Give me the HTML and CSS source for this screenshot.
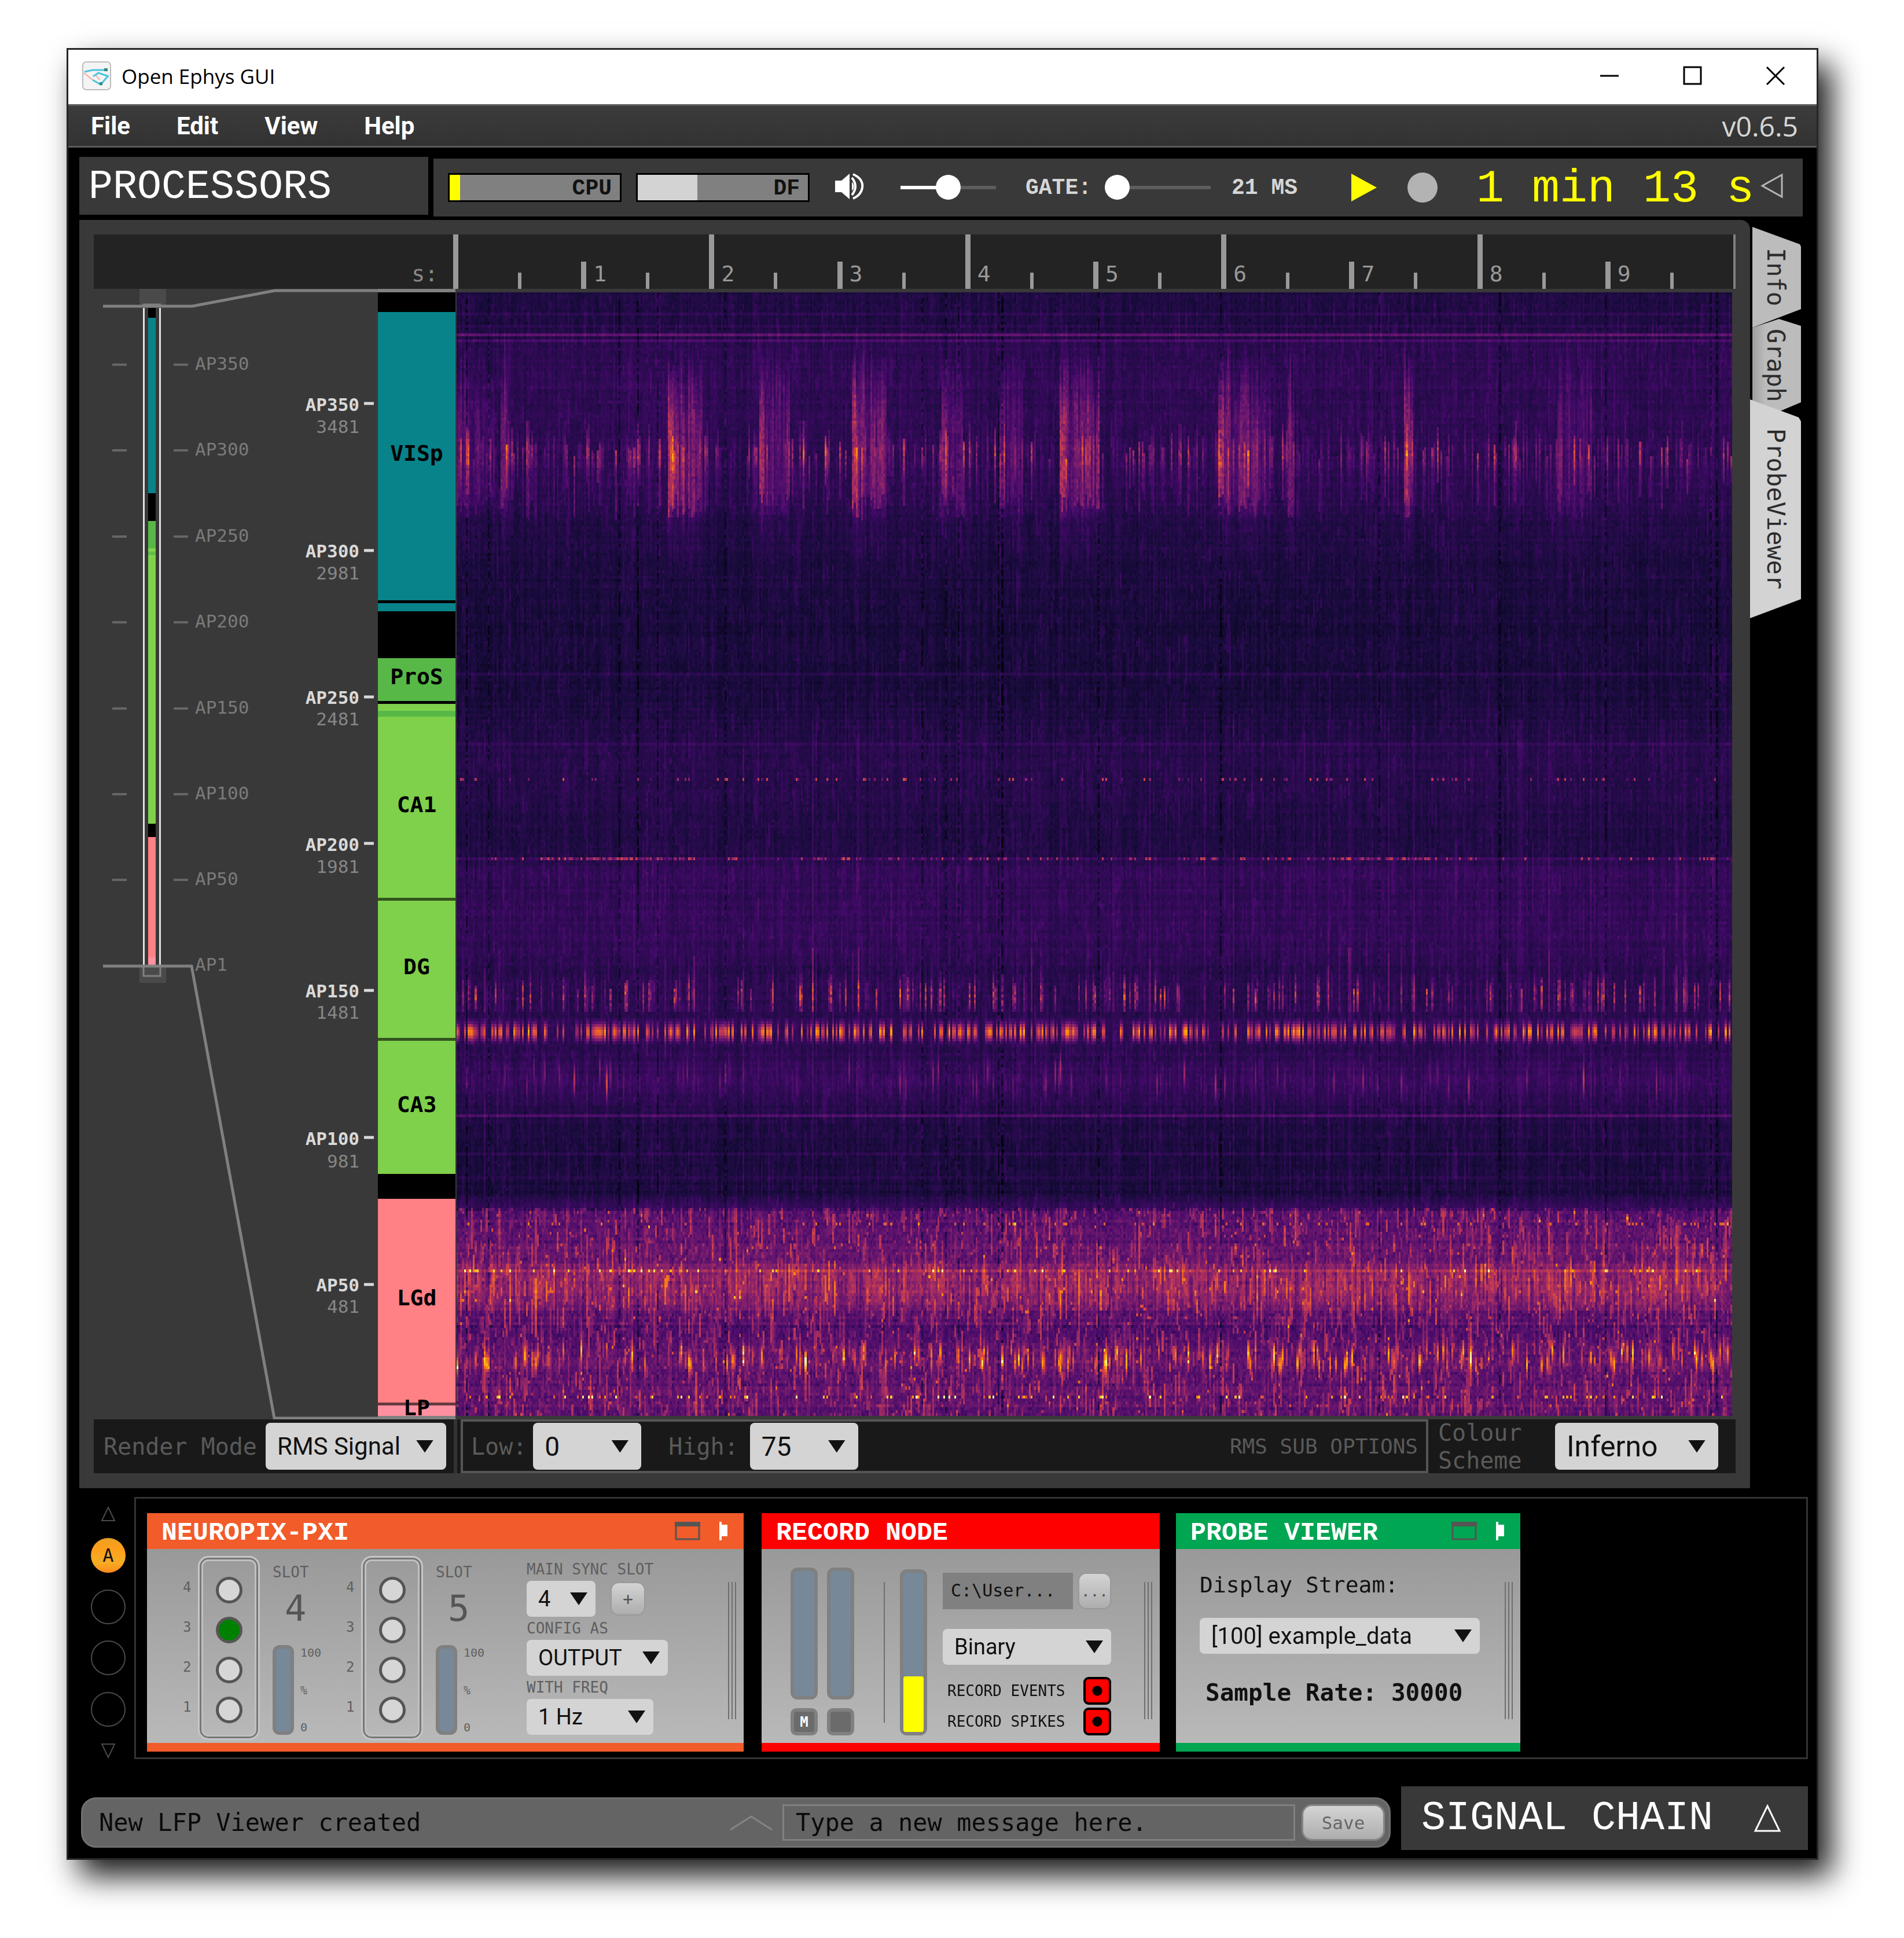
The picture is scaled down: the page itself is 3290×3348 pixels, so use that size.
FILE: index.html
```html
<!DOCTYPE html>
<html lang="en">
<head>
<meta charset="utf-8">
<title>Open Ephys GUI</title>
<link rel="stylesheet" href="styles.css">
</head>
<body>
<div class="window">
  <header class="titlebar">
    <svg class="app-icon" viewBox="0 0 50 50" width="50" height="50" aria-hidden="true">
      <rect x="1" y="1" width="48" height="48" rx="6" fill="#f4f4f4" stroke="#bdbdbd" stroke-width="2"/>
      <path d="M4 18L18 15H40M19 26L28 20L46 26M18 32L32 40L44 26" fill="none" stroke="#4cc4dc" stroke-width="3"/>
      <path d="M3 20L18 32M24 24L30 32" stroke="#f2a89c" stroke-width="2"/>
      <path d="M38 12h6v5h-6zM30 36h5v5h-5z" fill="#2a8c7c"/>
    </svg>
    <h1 class="app-title">Open Ephys GUI</h1>
    <div class="window-buttons">
      <button class="win-btn" aria-label="Minimize"><svg width="34" height="34" viewBox="0 0 34 34"><path d="M1 17H33" stroke="#000" stroke-width="3"/></svg></button>
      <button class="win-btn" aria-label="Maximize"><svg width="34" height="34" viewBox="0 0 34 34"><rect x="2" y="2" width="29" height="29" fill="none" stroke="#000" stroke-width="3"/></svg></button>
      <button class="win-btn" aria-label="Close"><svg width="34" height="34" viewBox="0 0 34 34"><path d="M2 2L32 32M32 2L2 32" stroke="#000" stroke-width="3"/></svg></button>
    </div>
  </header>

  <nav class="menubar">
    <button class="menu">File</button>
    <button class="menu">Edit</button>
    <button class="menu">View</button>
    <button class="menu">Help</button>
    <span class="version">v0.6.5</span>
  </nav>

  <div class="top-row">
    <button class="processors">PROCESSORS</button>
    <div class="control-panel">
      <div class="meter"><div class="meter-fill cpu" style="width:6%"></div><span class="meter-label">CPU</span></div>
      <div class="meter"><div class="meter-fill disk" style="width:35%"></div><span class="meter-label">DF</span></div>
      <svg class="speaker" width="50" height="46" viewBox="0 0 50 46" aria-hidden="true">
        <path d="M0 13H11L25 1V45L11 33H0Z" fill="#fff"/>
        <path d="M29 15Q36 23 29 31Z" fill="#fff"/>
        <path d="M29 8Q41 23 29 38M31 2Q49 10 47 25Q45 38 31 44" fill="none" stroke="#fff" stroke-width="4"/>
      </svg>
      <input class="slider volume" type="range" min="0" max="100" value="50" aria-label="Volume">
      <label class="tiny" for="gate">GATE:</label>
      <input class="slider gate" id="gate" type="range" min="0" max="100" value="0">
      <span class="tiny latency">21 MS</span>
      <button class="play" aria-label="Play"><svg width="46" height="50" viewBox="0 0 46 50"><path d="M1 1L45 25L1 49Z" fill="#ff0"/></svg></button>
      <button class="record" aria-label="Record"></button>
      <span class="clock">1 min 13 s</span>
      <button class="expand" aria-label="Show recording options"><svg width="40" height="44" viewBox="0 0 40 44"><path d="M3 22L37 3V41Z" fill="none" stroke="#b4b4b4" stroke-width="3"/></svg></button>
    </div>
  </div>

  <div class="main-row">
    <main class="viewer">
      <div class="ruler">
        <span class="unit">s:</span>
        <span class="sec major"></span><span class="sec">1</span><span class="sec major">2</span><span class="sec">3</span><span class="sec major">4</span><span class="sec">5</span><span class="sec major">6</span><span class="sec">7</span><span class="sec major">8</span><span class="sec">9</span>
      </div>
      <div class="plot">
        <svg class="probe" width="491" height="1953" viewBox="0 0 491 1953">
          <g fill="#4a4a4a"><rect x="79" y="0" width="46" height="30"/><rect x="79" y="1170" width="46" height="29"/></g>
          <g fill="#e0e0e0"><rect x="85" y="33" width="3" height="1135"/><rect x="113" y="33" width="3" height="1135"/></g>
          <rect x="94" y="33" width="13" height="1135" fill="#000"/>
          <rect x="94" y="50" width="13" height="303" fill="#08838a"/>
          <rect x="94" y="401" width="13" height="47" fill="#58b847"/>
          <rect x="94" y="448" width="13" height="476" fill="#7fd04b"/>
          <rect x="94" y="454" width="13" height="6" fill="#62bd49"/>
          <rect x="94" y="947" width="13" height="208" fill="#ff8085"/>
          <rect x="94" y="1155" width="13" height="13" fill="#ff90a0"/>
          <g fill="none" stroke="#808080">
            <path d="M86 1170V1187H115V1170M86 30V27H115V30" stroke-width="3"/>
            <path d="M16 30H170L313 3H491M16 1170H169L312 1951H491" stroke-width="5"/>
          </g>
          <path class="ticks" d="M32 131h25M138 131h25M32 279h25M138 279h25M32 428h25M138 428h25M32 576h25M138 576h25M32 725h25M138 725h25M32 873h25M138 873h25M32 1021h25M138 1021h25"/>
          <g class="depth-small">
            <text x="175" y="140">AP350</text><text x="175" y="288">AP300</text><text x="175" y="437">AP250</text><text x="175" y="585">AP200</text><text x="175" y="734">AP150</text><text x="175" y="882">AP100</text><text x="175" y="1030">AP50</text><text x="175" y="1178">AP1</text>
          </g>
          <path class="ticks-main" d="M467 198h17M467 452h17M467 705h17M467 958h17M467 1212h17M467 1466h17M467 1720h17"/>
          <g class="depth-main">
            <text x="459" y="211">AP350</text><text x="459" y="464">AP300</text><text x="459" y="717">AP250</text><text x="459" y="971">AP200</text><text x="459" y="1224">AP150</text><text x="459" y="1479">AP100</text><text x="459" y="1732">AP50</text>
          </g>
          <g class="depth-um">
            <text x="459" y="249">3481</text><text x="459" y="502">2981</text><text x="459" y="754">2481</text><text x="459" y="1009">1981</text><text x="459" y="1261">1481</text><text x="459" y="1518">981</text><text x="459" y="1769">481</text>
          </g>
        </svg>
        <div class="regions">
          <div></div><div class="teal">VISp</div><div class="teal cut"></div><div></div>
          <div class="green">ProS</div><div class="lime cut"></div><div class="green"></div><div class="lime">CA1</div>
          <div class="lime soft-cut">DG</div><div class="lime soft-cut">CA3</div><div></div>
          <div class="pink">LGd</div><div class="rose soft-cut">LP</div>
        </div>
        <canvas class="heatmap" id="heatmap" width="700" height="384"></canvas>
      </div>
      <div class="options">
        <div class="opt-group mode">
          <label for="mode">Render Mode</label>
          <span class="combo w-mode"><select id="mode"><option>RMS Signal</option></select></span>
        </div>
        <div class="opt-group sub">
          <label for="low">Low:</label>
          <span class="combo w-num"><select id="low"><option>0</option></select></span>
          <label class="high" for="high">High:</label>
          <span class="combo w-num"><select id="high"><option>75</option></select></span>
          <span class="sub-title">RMS SUB OPTIONS</span>
        </div>
        <div class="opt-group scheme">
          <label for="scheme">Colour<br>Scheme</label>
          <span class="combo w-scheme"><select id="scheme"><option>Inferno</option></select></span>
        </div>
      </div>
    </main>
    <div class="tabs">
      <button class="tab info">Info</button>
      <button class="tab graph">Graph</button>
      <button class="tab probeviewer">ProbeViewer</button>
    </div>
  </div>

  <section class="chain-row">
    <div class="chain-picker">
      <button class="arrow" aria-label="Previous"><svg width="26" height="28" viewBox="0 0 26 28"><path d="M13 3L24 26H2Z" fill="none" stroke="#4a4a4a" stroke-width="2"/></svg></button>
      <button class="chain active">A</button>
      <button class="chain" aria-label="Chain B"></button>
      <button class="chain" aria-label="Chain C"></button>
      <button class="chain" aria-label="Chain D"></button>
      <button class="arrow" aria-label="Next"><svg width="26" height="28" viewBox="0 0 26 28"><path d="M13 25L2 2H24Z" fill="none" stroke="#4a4a4a" stroke-width="2"/></svg></button>
    </div>
    <div class="chain-view">
      <article class="module neuropix">
        <header><h2>NEUROPIX-PXI</h2>
          <svg class="mod-win" width="44" height="32" viewBox="0 0 44 32"><path d="M2 2H42V30H2Z" fill="none" stroke="#555" stroke-width="3"/><path d="M0 0H44V8H0Z" fill="#555"/></svg>
          <svg class="mod-fold" width="14" height="32" viewBox="0 0 14 32"><path d="M0 0H4V5H14V25H4V32H0Z" fill="#fff"/></svg>
        </header>
        <div class="mod-body">
          <div class="slot">
            <div class="ports-num"><span>4</span><span>3</span><span>2</span><span>1</span></div>
            <div class="ports">
              <input type="radio" name="port" aria-label="Slot 4 port 4"><input type="radio" name="port" aria-label="Slot 4 port 3" checked><input type="radio" name="port" aria-label="Slot 4 port 2"><input type="radio" name="port" aria-label="Slot 4 port 1">
            </div>
            <div class="slot-info">
              <span class="caption">SLOT</span><span class="slot-no">4</span>
              <div class="fifo"><div class="gauge"></div><div class="scale"><span>100</span><span>%</span><span>0</span></div></div>
            </div>
          </div>
          <div class="slot">
            <div class="ports-num"><span>4</span><span>3</span><span>2</span><span>1</span></div>
            <div class="ports">
              <input type="radio" name="port" aria-label="Slot 5 port 4"><input type="radio" name="port" aria-label="Slot 5 port 3"><input type="radio" name="port" aria-label="Slot 5 port 2"><input type="radio" name="port" aria-label="Slot 5 port 1">
            </div>
            <div class="slot-info">
              <span class="caption">SLOT</span><span class="slot-no">5</span>
              <div class="fifo"><div class="gauge"></div><div class="scale"><span>100</span><span>%</span><span>0</span></div></div>
            </div>
          </div>
          <div class="sync">
            <label class="caption" for="sync">MAIN SYNC SLOT</label>
            <div class="sync-row"><span class="combo small w-sync"><select id="sync"><option>4</option></select></span><button class="soft-btn plus">+</button></div>
            <label class="caption" for="config">CONFIG AS</label>
            <span class="combo small w-config"><select id="config"><option>OUTPUT</option></select></span>
            <label class="caption" for="freq">WITH FREQ</label>
            <span class="combo small w-freq"><select id="freq"><option>1 Hz</option></select></span>
          </div>
          <div class="grip"></div>
        </div>
      </article>

      <article class="module recorder">
        <header><h2>RECORD NODE</h2></header>
        <div class="mod-body">
          <div class="strip"><div class="gauge"></div><button class="sync-btn">M</button></div>
          <div class="strip"><div class="gauge"></div><button class="sync-btn" aria-label="Stream sync"></button></div>
          <div class="divider"></div>
          <div class="gauge disk-gauge"><div class="gauge-fill" style="height:35%"></div></div>
          <div class="rec-form">
            <div class="path-row"><span class="path">C:\User...</span><button class="soft-btn dots">...</button></div>
            <span class="combo small w-format"><select aria-label="File format"><option>Binary</option></select></span>
            <div class="rec-toggle"><label class="caption dark" for="rec-ev">RECORD EVENTS</label><input type="checkbox" id="rec-ev" checked></div>
            <div class="rec-toggle"><label class="caption dark" for="rec-sp">RECORD SPIKES</label><input type="checkbox" id="rec-sp" checked></div>
          </div>
          <div class="grip"></div>
        </div>
      </article>

      <article class="module probe-viewer">
        <header><h2>PROBE VIEWER</h2>
          <svg class="mod-win" width="44" height="32" viewBox="0 0 44 32"><path d="M2 2H42V30H2Z" fill="none" stroke="#555" stroke-width="3"/><path d="M0 0H44V8H0Z" fill="#555"/></svg>
          <svg class="mod-fold" width="14" height="32" viewBox="0 0 14 32"><path d="M0 0H4V5H14V25H4V32H0Z" fill="#fff"/></svg>
        </header>
        <div class="mod-body">
          <div class="stream-form">
            <label for="stream">Display Stream:</label>
            <span class="combo small w-stream"><select id="stream"><option>[100] example_data</option></select></span>
            <strong>Sample Rate: 30000</strong>
          </div>
          <div class="grip"></div>
        </div>
      </article>
    </div>
  </section>

  <footer class="bottom-row">
    <div class="message-bar">
      <span class="status">New LFP Viewer created</span>
      <svg class="chevron" width="76" height="28" viewBox="0 0 76 28"><path d="M2 26L38 3L74 26" fill="none" stroke="#858585" stroke-width="3"/></svg>
      <input class="message" type="text" value="Type a new message here." aria-label="Message">
      <button class="soft-btn save">Save</button>
    </div>
    <button class="signal-chain">SIGNAL CHAIN
      <svg width="46" height="48" viewBox="0 0 46 48"><path d="M23 3L44 46H2Z" fill="none" stroke="#fff" stroke-width="3"/></svg>
    </button>
  </footer>
</div>
<script src="heatmap.js"></script>
</body>
</html>
```
FILE: styles.css
```css
* { box-sizing: border-box; }
:root {
  --mono: "DejaVu Sans Mono", monospace;
  --tech: "Liberation Mono", monospace;
  --sans: Roboto, sans-serif;
  --panel: #393939;
}
body { margin: 0; padding: 83px 148px 135px 115px; background: #fff; font-family: var(--mono); }
button, input, select { margin: 0; padding: 0; border: 0; border-radius: 0; background: none; font: inherit; color: inherit; }
button { display: flex; align-items: center; justify-content: center; }
svg { display: block; flex: none; }
h1, h2 { margin: 0; }

.window { display: flex; flex-direction: column; background: #000; border: 3px solid #262626; box-shadow: 22px 28px 50px rgba(0,0,0,.9); }

.titlebar { display: flex; align-items: center; height: 94px; padding: 0 28px 4px 24px; background: #fff; }
.app-title { margin-left: 18px; font: 400 35px "Open Sans", sans-serif; color: #000; }
.window-buttons { display: flex; gap: 4px; margin-left: auto; }
.win-btn { width: 140px; height: 90px; }
.win-btn:last-child { width: 86px; margin-left: 26px; }

.menubar { display: flex; align-items: center; height: 75px; padding: 0 32px 0 39px; gap: 80px; background: linear-gradient(#3c3c3c, #323232); border-top: 3px solid #5a5a5a; border-bottom: 3px solid #5a5a5a; }
.menu { font: 700 42px var(--sans); color: #fff; }
.version { margin-left: auto; font: 48px "Open Sans", sans-serif; color: #d6d6d6; }

.top-row { display: flex; align-items: flex-start; gap: 9px; padding: 16px 24px 6px 19px; }
.processors { flex: none; width: 603px; height: 100px; padding: 4px 0 0 16px; justify-content: flex-start; background: var(--panel); color: #fff; font: 70px var(--tech); }
.control-panel { display: flex; flex: 1; align-items: center; height: 100px; margin-top: 3px; padding-left: 25px; background: var(--panel); }
.meter { display: flex; align-items: center; width: 300px; height: 50px; margin-right: 25px; border: 3px solid #000; background: #808080; }
.meter-fill { height: 100%; }
.cpu { background: #ff0; }
.disk { background: #d3d3d3; }
.meter-label { margin-left: auto; padding: 3px 14px 0 0; font: 700 38px/40px var(--tech); color: #111; }
.speaker { margin: 0 63px 4px 19px; }
.slider { appearance: none; height: 44px; }
.slider::-webkit-slider-runnable-track { height: 6px; background: #5d5d5d; }
.volume::-webkit-slider-runnable-track { background: linear-gradient(90deg, #fff 50%, #5d5d5d 50%); }
.slider::-webkit-slider-thumb { appearance: none; width: 43px; height: 43px; margin-top: -19px; border-radius: 50%; background: #fff; }
.volume { width: 165px; margin-right: 51px; }
.tiny { font: 700 38px var(--tech); color: #d6d6d6; }
.gate { width: 183px; margin-left: 23px; }
.latency { margin-left: 36px; }
.play { margin-left: 92px; }
.record { width: 52px; height: 52px; margin: 0 67px 0 52px; border-radius: 50%; background: #b3b3b3; }
.clock { padding-top: 4px; font: 80px var(--tech); color: #ff0; white-space: pre; }
.expand { margin: 0 33px 6px auto; }

.main-row { display: flex; align-items: flex-start; padding: 0 27px 15px 19px; }
.viewer { flex: 1; min-width: 0; padding: 25px 25px 26px; background: var(--panel); border-top-right-radius: 16px; }
.ruler { display: flex; height: 94px; background: #232323; border-right: 4px solid #808080; color: #999; }
.unit, .sec { padding-top: 45px; font: 38px/47px var(--mono); }
.unit { width: 621px; padding-right: 26px; text-align: right; color: #8a8a8a; }
.sec { flex: 1; padding-left: 21px; background: linear-gradient(#999, #999) 0 100% / 9px 47px no-repeat, linear-gradient(#999, #999) 52% 100% / 6px 28px no-repeat; }
.sec.major { background-size: 9px 94px, 6px 28px; }

.plot { display: flex; height: 1953px; }
.ticks { stroke: #666; stroke-width: 4; }
.ticks-main { stroke: #d9d9d9; stroke-width: 5; }
.depth-small { font: 31px var(--mono); fill: #7a7a7a; }
.depth-main { font: 700 31px var(--mono); fill: #d9d9d9; text-anchor: end; }
.depth-um { font: 31px var(--mono); fill: #868686; text-anchor: end; }
.regions { display: grid; grid-template-rows: 34fr 498fr 19fr 81fr 74fr 17fr 9fr 314fr 242fr 235fr 43fr 352fr 23fr; width: 134px; flex: none; border-top: 6px solid #808080; border-bottom: 6px solid #808080; background: #000; color: #000; font: 700 38px/24px var(--mono); }
.regions > div { display: flex; align-items: center; justify-content: center; min-height: 0; height: 100%; padding-bottom: 10px; }
.teal { background: #08838a; }
.green { background: #58b847; }
.lime { background: #7fd04b; }
.pink { background: #ff8085; }
.rose { background: #ff90a0; }
.cut { border-top: 5px solid #000; }
.soft-cut { border-top: 5px solid rgba(0,0,0,.6); }
.heatmap { flex: 1; min-width: 0; height: 1941px; margin: 6px 6px 6px 2px; image-rendering: pixelated; background: #160b39; }

.options { display: flex; height: 93px; background: #191919; color: #5a5a5a; font-size: 40px; }
.opt-group { display: flex; align-items: center; }
.mode { width: 628px; padding: 0 13px 0 17px; justify-content: space-between; border-right: 6px solid #333; }
.sub { flex: 1; margin-left: 6px; padding: 0 14px 0 14px; border: 4px solid #555; }
.sub .combo { margin-left: 11px; }
.high { margin-left: 47px; }
.sub .high + .combo { margin-left: 20px; }
.sub-title { margin-left: auto; font-size: 36px; }
.scheme { width: 531px; padding: 0 30px 0 17px; justify-content: space-between; line-height: 48px; }
.combo { display: grid; align-items: center; height: 81px; border-radius: 8px; background: #d4d4d4; color: #111; font: 42px var(--sans); }
.combo select { grid-area: 1 / 1; appearance: none; width: 100%; height: 100%; padding-left: 20px; outline: 0; color: #111; }
.combo::after { content: ""; grid-area: 1 / 1; justify-self: end; width: 30px; height: 22px; margin-right: 22px; background: #111; clip-path: polygon(0 0, 100% 0, 50% 100%); pointer-events: none; }
.small { height: 62px; font-size: 38px; }
.small::after { margin-right: 14px; }
.w-mode { width: 312px; }
.w-num { width: 187px; font-size: 46px; }
.w-scheme { width: 282px; font-size: 50px; }

.tabs { display: flex; flex-direction: column; width: 88px; padding-top: 12px; }
.tab { width: 88px; writing-mode: vertical-rl; font: 42px var(--mono); color: #2c2c2c; background: #bcbcbc; }
.info { height: 174px; clip-path: polygon(4px 0, 86px 30px, 88px 34px, 88px 142px, 4px 174px); }
.graph { height: 160px; margin-top: -15px; background: linear-gradient(90deg, #999, #bcbcbc 30%); clip-path: polygon(4px 15px, 50px 0, 88px 12px, 88px 144px, 50px 160px, 4px 143px); }
.probeviewer { height: 378px; margin-top: -21px; background: #d3d3d3; clip-path: polygon(0 0, 84px 31px, 88px 38px, 88px 345px, 0 378px); }

.chain-row { display: flex; padding: 0 15px 0 39px; }
.chain-picker { display: flex; flex-direction: column; align-items: center; justify-content: space-between; width: 60px; margin-right: 15px; padding: 15px 0 0; }
.chain { width: 60px; height: 60px; border: 2px solid #4a4a4a; border-radius: 50%; }
.active { border: 0; background: linear-gradient(#e8a020, #ff9f1c 30%, #f5ac24 70%, #ff8a1c); color: #111; font: 32px var(--mono); }
.chain-view { display: flex; flex: 1; gap: 28px; padding: 25px 19px 10px; border: 3px solid #333; }
.neuropix { --accent: #f25b2a; width: 1031px; margin-right: 3px; }
.recorder { --accent: #f00; width: 688px; }
.probe-viewer { --accent: #00a651; width: 595px; }
.module { flex: none; border-bottom: 15px solid var(--accent); }
.module header { display: flex; align-items: center; height: 62px; padding: 0 28px 0 25px; background: var(--accent); color: #fff; }
.module h2 { margin-right: auto; padding-top: 7px; font: 700 45px var(--tech); }
.mod-fold { margin-left: 33px; }
.mod-body { display: flex; align-items: flex-start; height: 335px; background: linear-gradient(#999, #b9b9b9); color: #111; }
.grip { width: 14px; height: 237px; margin: 57px 13px 0 auto; background: repeating-linear-gradient(90deg, #6e6e6e 0 2px, transparent 2px 6px); }
.caption { font: 26px/30px var(--mono); color: #5f5f5f; white-space: nowrap; }
.dark { color: #111; }

.slot { display: flex; margin-right: 42px; padding-top: 12px; }
.neuropix .mod-body { padding-left: 62px; }
.ports-num { display: flex; flex-direction: column; gap: 23px; width: 15px; margin-right: 11px; padding-top: 31px; font: 24px/46px var(--mono); color: #5f5f5f; }
.ports { display: flex; flex-direction: column; align-items: center; gap: 23px; width: 107px; height: 318px; padding-top: 33px; border: 3px solid #c6c6c6; border-radius: 18px; box-shadow: inset 0 0 0 3px #777, inset 0 0 0 6px #c0c0c0; }
.ports input { appearance: none; width: 46px; height: 46px; flex: none; border: 5px solid #555; border-radius: 50%; background: #d6d6d6; }
.ports input:checked { background: #008000; }
.slot-info { display: flex; flex-direction: column; width: 85px; margin-left: 22px; padding-top: 13px; }
.slot-no { margin: 16px 0 31px; padding-left: 21px; font: 62px/64px var(--mono); color: #555; }
.fifo { display: flex; gap: 11px; height: 155px; }
.gauge { width: 37px; border: 6px solid #808080; border-radius: 12px; background: #778899; }
.scale { display: flex; flex-direction: column; justify-content: space-between; font: 20px/26px var(--mono); color: #5f5f5f; }
.sync { display: flex; flex-direction: column; gap: 5px; margin-left: 30px; padding-top: 20px; }
.sync-row { display: flex; align-items: center; gap: 26px; }
.soft-btn { border: 2px solid #999; border-radius: 14px; background: linear-gradient(#d4d4d4, #adadad); color: #555; }
.plus { width: 60px; height: 58px; font-size: 30px; }
.w-sync { width: 119px; }
.w-config { width: 244px; }
.w-freq { width: 219px; }

.recorder .mod-body { padding-left: 50px; }
.strip { display: flex; flex-direction: column; gap: 15px; margin: 32px 16px 0 0; }
.strip .gauge, .disk-gauge { width: 47px; height: 228px; }
.sync-btn { width: 47px; height: 47px; border: 6px solid #808080; border-radius: 10px; background: #6b6b6b; color: #fff; font: 700 24px var(--mono); }
.divider { width: 2px; height: 243px; margin: 57px 26px 0 35px; background: #6e6e6e; }
.gauge.disk-gauge { display: flex; align-items: flex-end; width: 47px; height: 287px; margin-top: 35px; }
.gauge-fill { width: 100%; border-radius: 4px; background: #ff0; }
.rec-form { width: 291px; margin-left: 27px; padding-top: 41px; }
.path-row { display: flex; justify-content: space-between; height: 63px; margin-bottom: 34px; }
.path { width: 225px; padding-left: 14px; background: #808080; font-size: 30px; line-height: 61px; }
.dots { width: 57px; font-size: 26px; }
.w-format { width: 291px; margin-bottom: 21px; }
.rec-toggle { display: flex; align-items: center; justify-content: space-between; height: 48px; margin-bottom: 5px; padding-left: 8px; }
.rec-toggle input { appearance: none; width: 48px; height: 48px; border: 4px solid #000; border-radius: 9px; background: radial-gradient(circle, #000 8px, #f00 9px); }

.stream-form { display: flex; flex-direction: column; padding: 38px 0 0 41px; font-size: 38px; line-height: 48px; }
.w-stream { width: 484px; margin: 33px 0 43px; font-size: 40px; }
.stream-form strong { padding-left: 10px; font-size: 41px; }

.bottom-row { display: flex; align-items: flex-start; gap: 18px; margin-top: 47px; padding: 0 15px 14px 22px; }
.message-bar { display: flex; flex: 1; align-items: center; height: 87px; margin-top: 19px; padding: 0 7px 0 28px; border: 3px solid #707070; border-radius: 26px; background: #646464; color: #0a0a0a; font-size: 42px; }
.status { margin-right: auto; }
.message { width: 886px; height: 63px; margin: 0 11px 0 16px; padding-left: 20px; border: 3px solid #808080; }
.save { width: 144px; height: 63px; border: 3px solid #858585; border-radius: 18px; font-size: 31px; color: #666; }
.signal-chain { width: 703px; height: 110px; padding: 0 47px 0 35px; justify-content: space-between; background: var(--panel); color: #fff; font: 70px var(--tech); }
```
FILE: heatmap.js
```js
// RMS heatmap: one row per channel, one column per time bin.
const canvas = document.getElementById('heatmap');
const ctx = canvas.getContext('2d');
const W = canvas.width, H = canvas.height;

let seed = 20231;
function rnd() {
  seed = (seed * 1664525 + 1013904223) >>> 0;
  return seed / 4294967296;
}

const INFERNO = [[0,0,4],[22,11,57],[66,10,104],[106,23,110],[147,38,103],[188,55,84],[221,81,58],[243,120,25],[252,165,10],[246,215,70],[252,255,164]];
function colour(v) {
  const t = Math.max(0, Math.min(0.999, v)) * 10, i = Math.floor(t), f = t - i;
  return INFERNO[i].map((c, k) => c + (INFERNO[i + 1][k] - c) * f);
}

// Mean level by depth, in permille of the plot height.
const LEVELS = [[0,.125],[35,.125],[50,.15],[80,.155],[185,.145],[200,.125],[290,.105],[360,.105],[395,.13],[420,.14],[480,.125],[502,.13],[510,.16],[575,.165],[600,.14],[680,.15],[710,.16],[730,.125],[800,.105],[808,.15],[813,.17],[817,.27],[860,.31],[872,.37],[888,.39],[902,.31],[918,.25],[950,.29],[1000,.29]];
function level(p) {
  for (let i = 1; i < LEVELS.length; i++) {
    if (p <= LEVELS[i][0]) {
      const [a, x] = LEVELS[i - 1], [b, y] = LEVELS[i];
      return x + (y - x) * (p - a) / (b - a);
    }
  }
  return .29;
}

const columns = (fn) => Array.from({ length: W }, fn);
const wobble = columns(() => (rnd() - .5) * .035);
const dark = columns(() => rnd() < .035);
const streak = columns(() => rnd() < .12 ? rnd() * .09 : 0);
const spikesA = columns(() => rnd() < .5 ? .03 + rnd() * rnd() * .4 : 0);
const spikesTop = columns(() => 112 + rnd() * 35);
const spikesEnd = columns(() => 165 + rnd() * 38);
const spikesB = columns(() => rnd() < .3 ? rnd() * .42 : 0);
const startB = columns(() => 580 + rnd() * 40);
const pulse = columns(() => rnd() < .5 ? .2 + rnd() * .45 : .02);
const spikesC = columns(() => rnd() < .16 ? rnd() * rnd() * .45 : rnd() * .03);
const centreC = columns(() => 690 + rnd() * 16);
const glow = columns(() => (rnd() - .35) * .2);
const spikesD = columns(() => rnd() < .3 ? rnd() * .55 : 0);
const centreD = columns(() => 940 + rnd() * 14);
const dots = columns(() => rnd() < .22 ? .3 + rnd() * .45 : 0);

// Cortical up-states: start and end column, strength.
const BURSTS = [[0,8,.1],[10,20,.07],[24,28,.12],[116,134,.23],[166,182,.19],[217,235,.22],[266,277,.15],[298,310,.1],[331,352,.23],[418,437,.2],[438,446,.1],[456,459,.12],[520,524,.17],[604,622,.1]];
const burst = columns(() => 0);
for (const [a, b, s] of BURSTS) {
  for (let x = a; x <= b; x++) burst[x] = s * (x < a + 3 ? 1.3 : .25 + rnd() * .75);
}
const burstTop = columns(() => 40 + rnd() * 45);
const burstEnd = columns(() => 178 + rnd() * 22);

const bell = (p, c, w) => {
  const d = (p - c) / w;
  return Math.exp(-d * d);
};
const LINES = { 7: .03, 11: .02, 14: .13, 16: .07, 32: .02, 130: .045, 154: .03, 281: .11, 294: .03, 302: .03, 320: .03, 334: .08, 339: .03, 352: .04 };

// Activity that lasts over several neighbouring channels.
const held = columns(() => 0);
const image = ctx.createImageData(W, H);
for (let y = 0; y < H; y++) {
  const p = y / H * 1000;
  const loud = p > 815;
  const rowShift = (rnd() - .5) * (loud ? .05 : .018);
  const base = level(p) + rowShift + (LINES[y] || 0);
  for (let x = 0; x < W; x++) {
    if (rnd() < .22) held[x] = Math.pow(rnd(), 5);
    let v = base + wobble[x] + (rnd() + rnd() - 1) * (loud ? .07 : .025);
    v += (held[x] - .12) * (loud ? .28 : .05);
    if (p > burstTop[x] && p < 200) {
      const tail = p > burstEnd[x] ? .35 : 1;
      v += burst[x] * Math.min(1, (p - burstTop[x]) / 55 + .1) * tail * (.7 + rnd() * .5);
    } else if (p >= 200 && p < 260) v += burst[x] * .2 * (260 - p) / 60;
    if (p > spikesTop[x] && p < spikesEnd[x]) {
      v += spikesA[x] * (.4 + bell(p, 142, 13) * .9) * (.6 + rnd() * .5);
    }
    if (p > startB[x] && p < 640) v += streak[x] + spikesB[x] * (.12 + bell(p, 624, 13)) * (.4 + rnd() * .8);
    if (p > 380 && p < 800) v += streak[x] * .5;
    if (p > 645 && p < 669) v += pulse[x] * bell(p, 657, 7);
    v += spikesC[x] * bell(p, centreC[x], 12);
    if (y === 166 && rnd() < .14) v += .45 * rnd();
    if (y === 193) v += (x > 45 && x < 132 || x > 480 && x < 535 || rnd() < .25) ? rnd() * .42 : .04;
    if (loud) {
      v += glow[x] * bell(p, 882, 20) + (rnd() < .015 ? rnd() * .35 : 0);
      v += spikesD[x] * bell(p, centreD[x], 9);
      if (y === 377) v += rnd() < .65 ? dots[x] : 0;
      if (y === 318 || y === 334) v += rnd() < .08 ? .4 : 0;
    }
    if (dark[x] && rnd() < .6) v -= loud ? .12 : .07;
    const [r, g, b] = colour(Math.max(v, .02));
    const o = (y * W + x) * 4;
    image.data[o] = r; image.data[o + 1] = g; image.data[o + 2] = b; image.data[o + 3] = 255;
  }
}
ctx.putImageData(image, 0, 0);
```
